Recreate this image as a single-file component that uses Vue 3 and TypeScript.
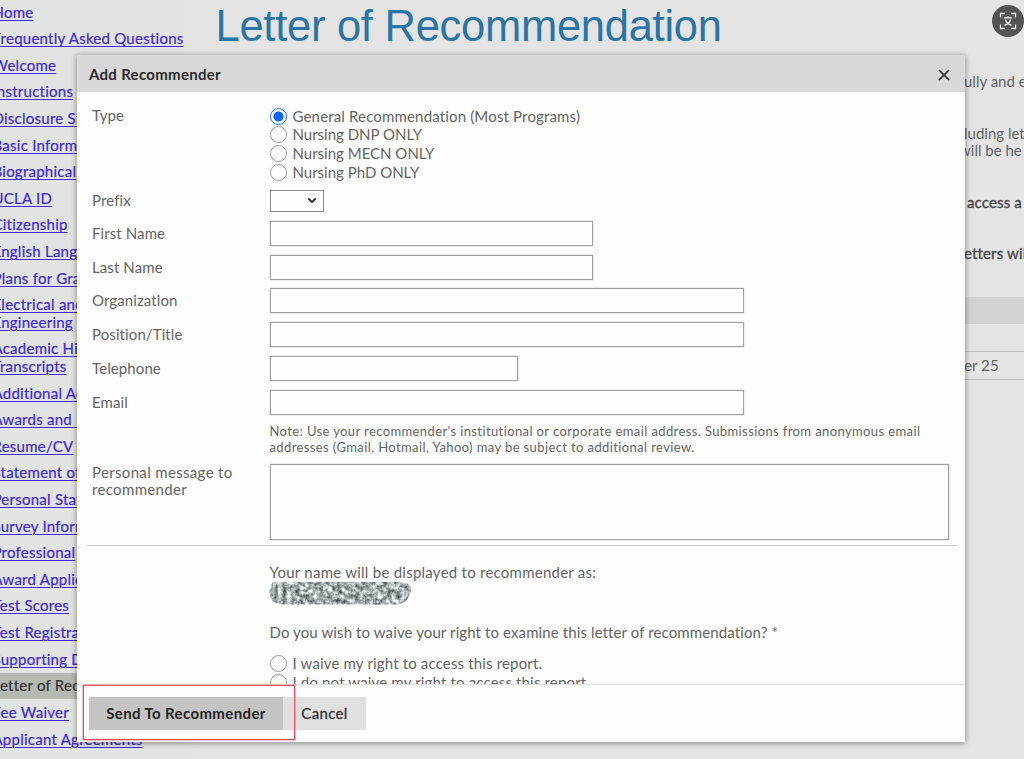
<script setup lang="ts">
import { ref } from 'vue'

interface NavItem {
  label: string
  tail?: string
  active?: boolean
}

interface Field {
  label: string
  size: 'short' | 'medium' | 'long'
}

const nav: NavItem[] = [
  { label: 'Home' },
  { label: 'Frequently Asked Questions' },
  { label: 'Welcome' },
  { label: 'Instructions' },
  { label: 'Disclosure Statement' },
  { label: 'Basic Information' },
  { label: 'Biographical' },
  { label: 'UCLA ID' },
  { label: 'Citizenship' },
  { label: 'English Language' },
  { label: 'Plans for Graduate' },
  { label: 'Electrical and', tail: 'Engineering' },
  { label: 'Academic History', tail: 'Transcripts' },
  { label: 'Additional Academic' },
  { label: 'Awards and\u00a0 Honors' },
  { label: 'Resume/CV' },
  { label: 'Statement of Purpose' },
  { label: 'Personal Statement' },
  { label: 'Survey Information' },
  { label: 'Professional' },
  { label: 'Award Application' },
  { label: 'Test Scores' },
  { label: 'Test Registration' },
  { label: 'Supporting Docs' },
  { label: 'Letter of Rec', active: true },
  { label: 'Fee Waiver' },
  { label: 'Applicant Agreements' },
]

const types = [
  'General Recommendation (Most Programs)',
  'Nursing DNP ONLY',
  'Nursing MECN ONLY',
  'Nursing PhD ONLY',
]
const selected = ref(0)

const fields: Field[] = [
  { label: 'First Name', size: 'medium' },
  { label: 'Last Name', size: 'medium' },
  { label: 'Organization', size: 'long' },
  { label: 'Position/Title', size: 'long' },
  { label: 'Telephone', size: 'short' },
  { label: 'Email', size: 'long' },
]
</script>

<template>
  <div class="page">
    <nav class="sidebar">
      <div v-for="item in nav" :key="item.label" class="nav-row" :class="{ active: item.active }">
        <a class="nav-link">{{ item.label }}<template v-if="item.tail"><br />{{ item.tail }}</template></a>
      </div>
    </nav>

    <main class="content">
      <h1 class="title">Letter of Recommendation</h1>
      <div class="excerpt">
        <p>ully and e</p>
        <p class="two">luding let<br /><span class="nudge">will be he</span></p>
        <p class="strong">access a</p>
        <p class="strong last">etters will</p>
        <div class="band"></div>
        <div class="cell"></div>
        <div class="cell entry">er 25</div>
      </div>
    </main>

    <section class="modal">
      <header class="modal-head">
        <span class="modal-title">Add Recommender</span>
        <svg class="close" viewBox="0 0 12 12"><path d="M1 1 L11 11 M11 1 L1 11" /></svg>
      </header>

      <div class="modal-body">
        <div class="row type-row">
          <div class="label">Type</div>
          <div>
            <div v-for="(t, i) in types" :key="t" class="option" @click="selected = i">
              <span class="radio" :class="{ on: selected === i }"></span>
              <span class="opt-text" :class="{ wide: i === 0 }">{{ t }}</span>
            </div>
          </div>
        </div>
        <div class="row prefix-row">
          <div class="label">Prefix</div>
          <div class="select">
            <svg viewBox="0 0 10 7"><path d="M1.2 1.5 L5 5 L8.8 1.5" /></svg>
          </div>
        </div>
        <div v-for="f in fields" :key="f.label" class="row field-row">
          <div class="label">{{ f.label }}</div>
          <div class="input" :class="f.size"></div>
        </div>
        <p class="note">
          Note: Use your recommender's institutional or corporate email address. Submissions from anonymous email<br />
          addresses (Gmail, Hotmail, Yahoo) may be subject to additional review.
        </p>
        <div class="row message-row">
          <div class="label">Personal message to<br />recommender</div>
          <div class="textarea"></div>
        </div>
        <div class="rule"></div>
        <div class="lower">
          <p class="name-line">Your name will be displayed to recommender as:</p>
          <svg class="redacted" viewBox="0 0 143 24">
            <defs>
              <filter id="speckle" x="0" y="0" width="1" height="1" color-interpolation-filters="sRGB">
                <feTurbulence type="fractalNoise" baseFrequency="0.22" numOctaves="3" seed="6" />
                <feColorMatrix type="matrix" values="1 .7 0 0 -0.2  1 .7 0 0 -0.17  1 .7 0 0 -0.16  0 0 0 0 1" />
              </filter>
              <clipPath id="pill">
                <path d="M5 1 H136 Q145 6 141 13 Q138 22 129 23.5 H12 Q1 22 .5 12 Q0 4 5 1Z" />
              </clipPath>
            </defs>
            <g clip-path="url(#pill)"><rect width="143" height="24" filter="url(#speckle)" /></g>
          </svg>
          <p class="waive">Do you wish to waive your right to examine this letter of recommendation? *</p>
          <div class="option"><span class="radio"></span><span class="opt-text wide">I waive my right to access this report.</span></div>
          <div class="option"><span class="radio"></span><span class="opt-text wide">I do not waive my right to access this report.</span></div>
        </div>
      </div>

      <footer class="modal-foot">
        <div class="btn primary">Send To Recommender</div>
        <div class="btn cancel">Cancel</div>
        <div class="highlight"></div>
      </footer>
    </section>

    <div class="lens">
      <svg viewBox="0 0 32 32">
        <path d="M8.5 12.5 V8.5 H13 M19 8.5 H23.5 V12.5 M23.5 19.5 V23.5 H19 M13 23.5 H8.5 V19.5" />
        <path d="M12 12.8 H20 M16 11 V13 M13.3 14.5 Q15 19 19.5 20.2 M18.7 14.5 Q17 19 12.5 20.2" />
      </svg>
    </div>
  </div>
</template>

<style>
html,
body {
  overflow: hidden;
}
</style>

<style scoped>
.page {
  position: relative;
  display: flex;
  width: 1024px;
  height: 759px;
  overflow: hidden;
  background: #e4e4e4;
  font-family: Lato, 'Liberation Sans', sans-serif;
  font-size: 15px;
  font-variant-ligatures: none;
  color: #636363;
}
p,
h1 {
  margin: 0;
}
.sidebar {
  width: 208px;
  flex: none;
  margin-top: -1px;
  padding-bottom: 30px;
  background: linear-gradient(90deg, #e0e4e2, #e3e4e3);
}
.nav-row {
  box-sizing: border-box;
  padding: 4.5px 0 4.52px;
  line-height: 17.6px;
  white-space: nowrap;
}
.nav-link {
  display: block;
  margin-left: -7.5px;
  color: #3e28d9;
  text-decoration: underline;
  text-decoration-thickness: 1px;
  text-underline-offset: 2px;
  -webkit-text-stroke: 0.2px currentColor;
  letter-spacing: 0.25px;
}
.nav-row.active {
  background: #b5b9b1;
}
.active .nav-link {
  color: #333;
  text-decoration: none;
}
.content {
  flex: 1;
  min-width: 0;
}
.title {
  padding: 1px 0 0 7.5px;
  font: 400 43.5px/51px 'Liberation Sans', Arial, sans-serif;
  letter-spacing: -0.27px;
  color: #2a74a6;
  white-space: nowrap;
}
.excerpt {
  margin-left: 756px;
  padding-top: 21px;
  line-height: 17.5px;
  white-space: nowrap;
}
.excerpt p {
  margin-bottom: 34px;
}
.excerpt .nudge {
  margin-left: -5px;
}
.excerpt .strong {
  padding-left: 3px;
  color: #484848;
  letter-spacing: 0.15px;
  -webkit-text-stroke: 0.35px currentColor;
}
.excerpt .last {
  padding-left: 0;
}
.band {
  height: 27px;
  background: #d2d2d2;
}
.cell {
  height: 27px;
  border-bottom: 1px solid #bcbcbc;
}
.entry {
  line-height: 26px;
  font-size: 15.2px;
}
.modal {
  position: absolute;
  left: 77px;
  top: 55px;
  width: 888px;
  height: 687px;
  display: flex;
  flex-direction: column;
  background: #fefefe;
  box-shadow: 0 1px 6px rgba(0, 0, 0, 0.45);
}
.modal-head {
  display: flex;
  align-items: center;
  justify-content: space-between;
  height: 37px;
  padding: 0 15px 0 12px;
  background: #d9d8d8;
}
.modal-title {
  font-weight: 700;
  letter-spacing: 0.3px;
  color: #2a2a2a;
}
.close {
  width: 12px;
  height: 12px;
  margin-top: 2px;
  fill: none;
  stroke: #2a2a2a;
  stroke-width: 1.7;
}
.modal-body {
  height: 592px;
  overflow: hidden;
}
.row {
  display: grid;
  grid-template-columns: 177px 1fr;
  padding-left: 15px;
  column-gap: 0.5px;
}
.label {
  line-height: 17.5px;
  letter-spacing: 0.1px;
  white-space: nowrap;
}
.type-row {
  padding-top: 15px;
}
.option {
  display: flex;
  align-items: center;
  height: 18.6px;
  white-space: nowrap;
}
.opt-text {
  margin-top: -1px;
}
.opt-text.wide {
  letter-spacing: 0.16px;
}
.radio {
  box-sizing: border-box;
  width: 17px;
  height: 17px;
  margin-right: 6px;
  border: 1.3px solid #999;
  border-radius: 50%;
  background: #fff;
}
.radio.on {
  border: 1.6px solid #1470ea;
  background: radial-gradient(circle, #0b66e8 4.6px, #fff 5.4px);
}
.prefix-row {
  padding-top: 8.5px;
  margin-bottom: 9px;
  align-items: center;
}
.select {
  box-sizing: border-box;
  display: flex;
  align-items: center;
  justify-content: flex-end;
  width: 54.5px;
  height: 22px;
  padding-right: 6px;
  border: 1px solid #8a8a8a;
}
.select svg {
  width: 10px;
  height: 7px;
  fill: none;
  stroke: #2a2a2a;
  stroke-width: 1.8;
}
.field-row {
  height: 33.75px;
  align-items: start;
}
.field-row .label {
  padding-top: 4px;
}
.input {
  box-sizing: border-box;
  height: 25px;
  border: 1px solid #a0a0a0;
  box-shadow: 0 0 1px #999;
}
.short {
  width: 248px;
}
.medium {
  width: 323.5px;
}
.long {
  width: 474.5px;
}
.note {
  padding: 1px 0 0 192.5px;
  font-size: 13px;
  line-height: 15.5px;
  letter-spacing: 0.39px;
  white-space: nowrap;
}
.message-row {
  padding-top: 8.5px;
}
.message-row .label {
  letter-spacing: 0.34px;
}
.textarea {
  box-sizing: border-box;
  width: 679.5px;
  height: 76px;
  border: 1px solid #a0a0a0;
  box-shadow: 0 0 1px #999;
}
.rule {
  height: 1px;
  margin: 5px 8px 0 10px;
  background: #c9cacc;
}
.lower {
  padding-left: 192.5px;
  white-space: nowrap;
}
.name-line {
  padding-top: 17px;
  line-height: 18px;
  letter-spacing: 0.25px;
}
.redacted {
  display: block;
  width: 143px;
  height: 24px;
  margin-left: -1px;
}
.waive {
  padding: 18.5px 0 13px;
  line-height: 18px;
  letter-spacing: 0.11px;
}
.modal-foot {
  position: relative;
  display: flex;
  height: 58px;
  padding: 12px 0 0 12px;
  box-sizing: border-box;
  border-top: 1px solid #dfe0e4;
}
.btn {
  height: 33px;
  line-height: 33px;
  text-align: center;
  white-space: nowrap;
}
.primary {
  width: 194px;
  background: #c5c4c5;
  color: #222;
  font-weight: 700;
  letter-spacing: 0.38px;
}
.cancel {
  box-sizing: border-box;
  width: 83px;
  background: #e0e0e1;
  color: #333;
  letter-spacing: 0.35px;
  -webkit-text-stroke: 0.3px currentColor;
}
.highlight {
  position: absolute;
  left: 6px;
  top: 0;
  width: 212px;
  height: 55px;
  box-sizing: border-box;
  border: 1px solid #ea5055;
  box-shadow: 0 0 0 0.5px #ef8286;
}
.lens {
  position: absolute;
  left: 992px;
  top: 5px;
  width: 32px;
  height: 32px;
  border-radius: 50%;
  background: #545454;
}
.lens svg {
  display: block;
  fill: none;
  stroke: #f2f2f2;
  stroke-width: 1.3;
}
</style>
